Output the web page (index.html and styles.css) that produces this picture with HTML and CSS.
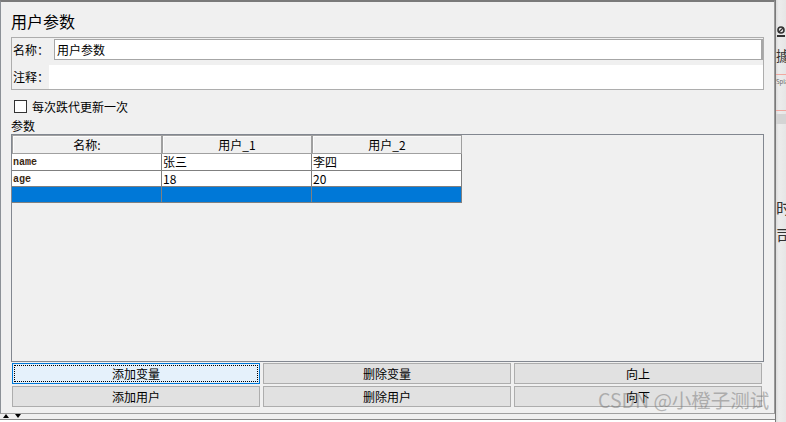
FILE: index.html
```html
<!DOCTYPE html>
<html lang="zh">
<head>
<meta charset="utf-8">
<title>用户参数</title>
<link rel="stylesheet" href="styles.css">
</head>
<body>
<div class="app">
  <div class="main">
    <div class="panel">
      <h1 class="title">用户参数</h1>
      <div class="fields">
        <div class="row r1"><span class="lbl l1">名称：</span><div class="input">用户参数</div></div>
        <div class="row r2"><span class="lbl l2">注释：</span><div class="area"></div></div>
      </div>
      <div class="check"><span class="box"></span><span>每次跌代更新一次</span></div>
      <div class="section-label">参数</div>
      <div class="tablebox">
        <div class="grid">
          <div class="hd">名称:</div><div class="hd">用户_1</div><div class="hd">用户_2</div>
          <div class="c r-first mono">name</div><div class="c r-first">张三</div><div class="c r-first">李四</div>
          <div class="c mono">age</div><div class="c">18</div><div class="c">20</div>
          <div class="c sel"></div><div class="c sel"></div><div class="c sel"></div>
        </div>
      </div>
      <div class="buttons">
        <div class="btn focus">添加变量</div>
        <div class="btn">删除变量</div>
        <div class="btn">向上</div>
        <div class="btn">添加用户</div>
        <div class="btn">删除用户</div>
        <div class="btn">向下</div>
      </div>
      <div class="watermark">CSDN @小橙子测试</div>
    </div>
    <div class="footer">
      <div class="arrows"><span class="up"></span><span class="down"></span></div>
      <div class="sep"></div>
      <div class="white"><span class="cut">描述提示信息内容说明</span></div>
    </div>
  </div>
  <div class="side">
    <svg class="side-icon" width="10" height="12" viewBox="0 0 10 12"><circle cx="5" cy="4" r="3" fill="none" stroke="#333" stroke-width="1.6"/><path d="M1 11 L9 11 L9 9 L1 9 Z" fill="#333"/><path d="M3 6 L7 2" stroke="#333" stroke-width="1.2"/></svg>
    <span class="g g1">據</span>
    <span class="pink p1"></span>
    <span class="tiny">Spla</span>
    <span class="pink p2"></span>
    <span class="gbox"></span>
    <span class="g g2">时</span>
    <span class="g g3">司</span>
  </div>
</div>
</body>
</html>
```

FILE: styles.css
```css
html, body {
  margin: 0;
  padding: 0;
}
body {
  width: 786px;
  height: 422px;
  overflow: hidden;
  background: #f0f0f0;
  font-family: "Noto Sans CJK SC", "Noto Sans", sans-serif;
  font-size: 12px;
  color: #000;
}
* { box-sizing: border-box; }

.app {
  display: flex;
  height: 422px;
}
.main {
  width: 775px;
  flex: none;
  display: flex;
  flex-direction: column;
}
.panel {
  position: relative;
  height: 414px;
  border-top: 2px solid #7a7a7a;
  border-left: 1px solid #8c9197;
  border-right: 1px solid #9b9b9b;
  border-bottom: 1px solid #a0a0a0;
  padding: 0 10px;
  background: #f0f0f0;
  overflow: hidden;
}
.title {
  margin: 9px 0 0;
  height: 20px;
  font-size: 16px;
  line-height: 20px;
  font-weight: normal;
}
.fields {
  margin-top: 6px;
  height: 53px;
  border: 1px solid #adadad;
  padding-top: 1px;
}
.row {
  display: flex;
}
.r1 { height: 21px; margin-bottom: 5px; }
.r2 { height: 24px; }
.lbl {
  display: flex;
  align-items: center;
  padding-left: 1px;
  flex: none;
  line-height: 14px;
}
.l1 { width: 42px; }
.l2 { width: 37px; }
.input {
  flex: 1;
  background: #fff;
  border: 1px solid #a6a6a6;
  border-right-width: 2px;
  padding-left: 2px;
  display: flex;
  align-items: center;
  line-height: 14px;
}
.area {
  flex: 1;
  background: #fff;
}
.check {
  margin-top: 10px;
  height: 13px;
  display: flex;
  align-items: center;
  padding-left: 3px;
  line-height: 13px;
}
.box {
  width: 13px;
  height: 13px;
  border: 1px solid #333;
  background: #fff;
  margin-right: 5px;
}
.section-label {
  margin-top: 6px;
  height: 14px;
  line-height: 14px;
}
.tablebox {
  margin-top: 1px;
  height: 228px;
  border: 1px solid #828790;
  background: #f0f0f0;
}
.grid {
  display: grid;
  grid-template-columns: 150px 150px 150px;
  grid-template-rows: 19px 17px 16px 16px;
  width: 450px;
}
.hd {
  background: #f0f0f0;
  border: 1px solid #a0a0a0;
  box-shadow: inset 1px 1px 0 #fcfcfc;
  text-align: center;
  line-height: 17px;
}
.c {
  background: #fff;
  border-right: 1px solid #808080;
  border-bottom: 1px solid #808080;
  padding-left: 1px;
  white-space: nowrap;
  overflow: hidden;
  line-height: 15px;
}
.r-first { line-height: 16px; }
.mono {
  font-family: "Liberation Mono", monospace;
  font-size: 10px;
  font-weight: bold;
  color: #3a2812;
  line-height: 17px;
}
.c.sel {
  background: #0078d7;
}
.buttons {
  margin: 1px 0 0 1px;
  display: grid;
  grid-template-columns: repeat(3, 248px);
  grid-auto-rows: 21px;
  column-gap: 3px;
  row-gap: 2px;
}
.btn {
  border: 1px solid #adadad;
  background: #e1e1e1;
  display: flex;
  align-items: center;
  justify-content: center;
  line-height: 14px;
}
.btn.focus {
  position: relative;
  border-color: #0078d7;
  background: #e5f1fb;
}
.btn.focus::after {
  content: "";
  position: absolute;
  inset: 1px;
  border: 1px dotted #000;
}
.watermark {
  position: absolute;
  left: 597px;
  top: 388px;
  font-size: 19.5px;
  line-height: 20px;
  color: rgba(120, 120, 120, 0.5);
  white-space: nowrap;
}
.footer {
  height: 8px;
  display: flex;
  flex-direction: column;
}
.arrows {
  height: 5px;
  background: #f0f0f0;
  display: flex;
  align-items: flex-start;
  padding-left: 3px;
  gap: 5px;
}
.up {
  width: 0;
  height: 0;
  border-left: 3px solid transparent;
  border-right: 3px solid transparent;
  border-bottom: 4px solid #000;
}
.down {
  width: 0;
  height: 0;
  margin-left: 1px;
  border-left: 3px solid transparent;
  border-right: 3px solid transparent;
  border-top: 4px solid #000;
}
.sep {
  height: 1px;
  background: #8a8a8a;
}
.white {
  height: 2px;
  background: #fff;
  overflow: hidden;
  padding-left: 500px;
  position: relative;
}
.cut {
  display: block;
  font-size: 12px;
  line-height: 14px;
  margin-top: 1px;
  white-space: nowrap;
  color: #222;
}
.side {
  width: 11px;
  flex: none;
  background: linear-gradient(90deg, #d6d6d6, #ececec 35%, #e6e6e6);
  box-shadow: inset 1px 0 0 #7a7a7a;
  overflow: hidden;
  display: flex;
  flex-direction: column;
  padding-left: 1px;
}
.side-icon {
  margin-top: 26px;
  flex: none;
}
.g {
  display: block;
  font-size: 14px;
  line-height: 14px;
  color: #333;
  white-space: nowrap;
}
.g1 { margin-top: 10px; }
.pink {
  display: block;
  height: 1px;
  background: #f0a8a0;
  flex: none;
}
.p1 { margin-top: 12px; }
.tiny {
  font-size: 6px;
  line-height: 8px;
  color: #666;
  margin-top: 3px;
}
.p2 { margin-top: 24px; }
.gbox {
  display: block;
  height: 10px;
  background: #d4d4d4;
  margin-top: 3px;
  flex: none;
}
.g2 { margin-top: 75px; font-size: 16px; line-height: 16px; }
.g3 { margin-top: 12px; font-size: 16px; line-height: 16px; }
```
